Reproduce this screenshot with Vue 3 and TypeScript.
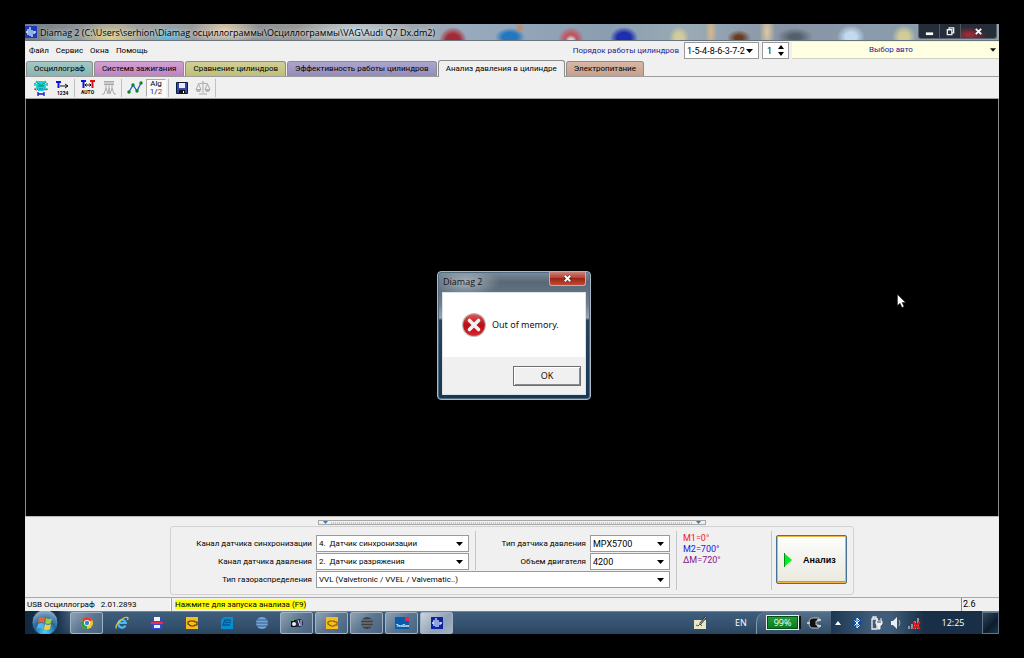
<script setup lang="ts">
import { ref } from 'vue'

interface Tab { label: string; tone: string }

const tabs: Tab[] = [
  { label: 'Осциллограф', tone: 'teal' },
  { label: 'Система зажигания', tone: 'pink' },
  { label: 'Сравнение цилиндров', tone: 'olive' },
  { label: 'Эффективность работы цилиндров', tone: 'violet' },
  { label: 'Анализ давления в цилиндре', tone: 'plain' },
  { label: 'Электропитание', tone: 'tan' },
]
const menus = ['Файл', 'Сервис', 'Окна', 'Помощь']
const active = ref(4)
const dialogOpen = ref(true)
const cylinder = ref(1)
</script>

<template>
  <div class="screen">
    <div class="desktop">
      <header class="titlebar">
        <svg class="app-icon" viewBox="0 0 12 12"><rect width="12" height="12" fill="#1a3ab8" /><path d="M1 6h2M3 3v6M5 1v9M7 4v7M9 5v3M9 6h2" fill="none" stroke="#dcecff" stroke-width="1.300" /></svg>
        <h1>Diamag 2 (C:\Users\serhion\Diamag осциллограммы\Осциллограммы\VAG\Audi Q7 Dx.dm2)</h1>
        <div class="win-buttons">
          <button aria-label="Свернуть"><svg viewBox="0 0 10 10"><path d="M1 6h8v3H1z" fill="#fff" /></svg></button>
          <button aria-label="Восстановить"><svg viewBox="0 0 10 10"><path d="M3.500 2.500V1h5v5.500H7M1.500 3h5v5.500h-5z" fill="none" stroke="#eee" stroke-width="1.500" /></svg></button>
          <button class="close" aria-label="Закрыть"><svg viewBox="0 0 10 10"><path d="M2 2l6 6M8 2L2 8" stroke="#fff" stroke-width="2" /></svg></button>
        </div>
      </header>

      <div class="menubar">
        <nav><button v-for="m in menus" :key="m">{{ m }}</button></nav>
        <label class="order-label" for="order">Порядок работы цилиндров</label>
        <div class="combo order">
          <select id="order" class="code"><option>1-5-4-8-6-3-7-2</option></select>
          <svg viewBox="0 0 7 4"><path d="M0 0h7L3.500 4z" /></svg>
        </div>
        <div class="spin">
          <input v-model="cylinder" type="text" aria-label="Цилиндр" />
          <div>
            <button aria-label="Больше" @click="cylinder++"><svg viewBox="0 0 6 4"><path d="M0 4h6L3 0z" /></svg></button>
            <button aria-label="Меньше" @click="cylinder--"><svg viewBox="0 0 6 4"><path d="M0 0h6L3 4z" /></svg></button>
          </div>
        </div>
        <button class="car">
          <span>Выбор авто</span>
          <svg viewBox="0 0 7 4"><path d="M0 0h7L3.500 4z" /></svg>
        </button>
      </div>

      <div class="tabs" role="tablist">
        <button v-for="(t, i) in tabs" :key="t.label" role="tab" :aria-selected="i === active" :class="[t.tone, { active: i === active }]" @click="active = i">{{ t.label }}</button>
      </div>

      <div class="toolbar">
        <div class="group">
          <button aria-label="Осциллограмма">
            <svg viewBox="0 0 16 16"><path d="M3 1l3 2M13 1l-3 2M1 5h3M15 5h-3M2 9l3-2M14 9l-3-2" stroke="#16c7d6" stroke-width="1.500" /><path d="M4 1h8v3l1 3-2 4H5L3 7l1-3z" fill="#19d3dc" /><path d="M1 4q3-3 5 0t4 0 5 0" fill="none" stroke="#18a050" /><path d="M1 9q3 2 4 0M11 9q2 2 4 0" fill="none" stroke="#e02020" /><path d="M5 6h6M6 9h4" stroke="#087f96" /><path d="M5 14h6M5 12v4M11 12v4" stroke="#1515d0" stroke-width="1.300" /></svg>
          </button>
          <button aria-label="Нумерация">
            <svg viewBox="0 0 16 16"><path d="M2 2h5M4.500 2v6" stroke="#1111e0" stroke-width="2" /><path d="M6 6h8M11 4l3 2-3 2" fill="none" stroke="#111" /><text x="3" y="15" font-size="5" font-weight="bold">1234</text></svg>
          </button>
        </div>
        <div class="group">
          <button aria-label="Авто">
            <svg viewBox="0 0 16 16"><path d="M1 1h5M3.500 1v7" stroke="#1111e0" stroke-width="2" /><path d="M10 1h5M12.500 1v7" stroke="#e01010" stroke-width="2" /><path d="M5 5h6M6.500 3.500L5 5l1.500 1.500M9.500 3.500L11 5 9.500 6.500" fill="none" stroke="#111" /><text x="1" y="14" font-size="5" font-weight="bold">AUTO</text></svg>
          </button>
          <button aria-label="Кривые" disabled>
            <svg viewBox="0 0 16 16"><path d="M3 1h10v4H3z" fill="#a8a8a8" /><path d="M3 3h10" stroke="#eee" /><path d="M5 5v3M8 5v3M11 5v3M1 14h2l2-6 2 6 1-6 1 6 2-6 2 6h2" fill="none" stroke="#aaa" /></svg>
          </button>
        </div>
        <div class="group">
          <button aria-label="График">
            <svg viewBox="0 0 16 16"><path d="M2 12l4-7 4 6 4-8" fill="none" stroke="#2356d8" stroke-width="1.300" /><g fill="#078a16"><circle cx="2" cy="12" r="1.700" /><circle cx="6" cy="5" r="1.700" /><circle cx="10" cy="11" r="1.700" /><circle cx="14" cy="3" r="1.700" /></g></svg>
          </button>
          <button class="pressed alg" aria-label="Алгоритм"><span>Alg</span><span><b class="blue">1</b>/<b class="red">2</b></span></button>
        </div>
        <div class="group">
          <button aria-label="Сохранить">
            <svg viewBox="0 0 16 16"><path d="M2.500 2.500h11v11h-11z" fill="#3448a4" stroke="#10183c" /><path d="M5 3h6v5H5z" fill="#e8ecf8" /><path d="M5 10h6v3H5z" fill="#111" /><path d="M9 11h1v2H9z" fill="#fff" /></svg>
          </button>
          <button aria-label="Сравнить" disabled>
            <svg viewBox="0 0 16 16"><path d="M8 1v12M4 14h8M3 4l5-1 5 1M3.500 4L1 9.500h5zM12.500 4L10 9.500h5z" fill="none" stroke="#aaa" /><path d="M1 10h5l-1 2H2zM10 10h5l-1 2h-3z" fill="#b5b5b5" /></svg>
          </button>
        </div>
      </div>

      <main class="viewer"></main>

      <section class="panel">
        <div class="splitter">
          <svg viewBox="0 0 5 3"><path d="M0 0h5L2.500 3z" /></svg><i></i><svg viewBox="0 0 5 3"><path d="M0 0h5L2.500 3z" /></svg>
        </div>
        <form class="settings" @submit.prevent>
          <div class="fields">
            <label for="sync">Канал датчика синхронизации</label>
            <div class="combo"><select id="sync"><option>4.&nbsp; Датчик синхронизации</option></select><svg viewBox="0 0 7 4"><path d="M0 0h7L3.500 4z" /></svg></div>
            <div class="rule"></div>
            <label for="sensor">Тип датчика давления</label>
            <div class="combo"><select id="sensor" class="code"><option>MPX5700</option></select><svg viewBox="0 0 7 4"><path d="M0 0h7L3.500 4z" /></svg></div>
            <label for="press">Канал датчика давления</label>
            <div class="combo"><select id="press"><option>2.&nbsp; Датчик разряжения</option></select><svg viewBox="0 0 7 4"><path d="M0 0h7L3.500 4z" /></svg></div>
            <label for="volume">Объем двигателя</label>
            <div class="combo"><select id="volume" class="code"><option>4200</option></select><svg viewBox="0 0 7 4"><path d="M0 0h7L3.500 4z" /></svg></div>
            <label for="valves">Тип газораспределения</label>
            <div class="combo wide"><select id="valves"><option>VVL (Valvetronic / VVEL / Valvematic..)</option></select><svg viewBox="0 0 7 4"><path d="M0 0h7L3.500 4z" /></svg></div>
          </div>
          <div class="marks">
            <span class="m1">M1=0°</span>
            <span class="m2">M2=700°</span>
            <span class="dm">ΔM=720°</span>
          </div>
          <div class="run">
            <button class="analyze"><svg viewBox="0 0 8 14"><path d="M0 0l8 7-8 7z" fill="#00f020" /><path d="M.5 0v14" stroke="#08901c" /></svg><span>Анализ</span></button>
          </div>
        </form>
      </section>

      <footer class="status">
        <div class="device"><span>USB Осциллограф</span><span>2.01.2893</span></div>
        <div class="hint"><mark>Нажмите для запуска анализа (F9)</mark></div>
        <div class="version">2.6</div>
      </footer>

      <div class="taskbar">
        <button class="start" aria-label="Пуск">
          <svg viewBox="0 0 28 23">
            <defs><radialGradient id="orb" cx="50%" cy="85%" r="85%"><stop offset="0" stop-color="#4fd0f4" /><stop offset=".5" stop-color="#24679c" /><stop offset="1" stop-color="#9db8cc" /></radialGradient></defs>
            <circle cx="14" cy="11.500" r="13" fill="url(#orb)" stroke="#16344e" />
            <path d="M8 7q3-2 6 0l-1 5q-3-2-6 0z" fill="#f0602c" /><path d="M15 7q3 2 6 0l-1 5q-3 2-6 0z" fill="#9ccb3c" />
            <path d="M7 13q3-2 6 0l-1 5q-3-2-6 0z" fill="#58b4ee" /><path d="M14 13q3 2 6 0l-1 5q-3 2-6 0z" fill="#fccb38" />
          </svg>
        </button>
        <div class="tasks">
          <button class="open" aria-label="Chrome"><svg viewBox="0 0 14 14"><circle cx="7" cy="7" r="6" fill="#f8c81c" /><path d="M7 7L1.800 4A6 6 0 0 1 12.200 4z" fill="#e23b2e" /><path d="M7 7L1.800 4A6 6 0 0 0 7 13z" fill="#27a04b" /><circle cx="7" cy="7" r="3" fill="#fff" /><circle cx="7" cy="7" r="2.200" fill="#3b7de8" /></svg></button>
          <button aria-label="Internet Explorer"><svg viewBox="0 0 14 14"><path d="M10.500 9.500A3.800 3.800 0 1 1 10.800 7H4" fill="none" stroke="#45bdf4" stroke-width="2.200" /><path d="M1.500 12.500C-1 9 9 0 12.500 1.500q1 .5 0 2.500" fill="none" stroke="#f4cb45" stroke-width="1.200" /></svg></button>
          <button aria-label="Total Commander"><svg viewBox="0 0 14 14"><path d="M2 1h10v12H2z" fill="#3447cf" /><path d="M4 1h6v4H4z" fill="#f2f2f2" /><path d="M1 6h12v2H1z" fill="#e63244" /><path d="M4 9h6v3H4z" fill="#eef" /></svg></button>
          <button aria-label="Диагностика"><svg viewBox="0 0 14 14"><path d="M1 1h12v12H1z" fill="#f8bd18" /><path d="M3 6l2-1h4l1 1h2v3h-2l-1 1H6L3 8z" fill="none" stroke="#4a3506" stroke-width="1.200" /></svg></button>
          <button aria-label="Электросхемы"><svg viewBox="0 0 14 14"><path d="M4 1h9v12H1V4z" fill="#078ed0" /><path d="M11 4H5L3 9h7M5 6.500h6" fill="none" stroke="#055b91" stroke-width="1.300" /></svg></button>
          <button aria-label="Сфера"><svg viewBox="0 0 14 14"><circle cx="7" cy="7" r="6" fill="#78a4d6" /><path d="M2 4h10M1 7h12M2 10h10" stroke="#315a8e" /></svg></button>
          <button class="open" aria-label="Камера"><svg viewBox="0 0 14 14"><path d="M1 4h6v7H1z" fill="#111" /><circle cx="9" cy="7" r="4" fill="#242a58" /><circle cx="4" cy="8" r="2" fill="#eee" /><path d="M8 4l2 6M11 4v6" stroke="#ddd" /><path d="M1 4h3" stroke="#29be39" stroke-width="2" /></svg></button>
          <button class="open" aria-label="Диагностика"><svg viewBox="0 0 14 14"><path d="M1 1h12v12H1z" fill="#f8bd18" /><path d="M3 6l2-1h4l1 1h2v3h-2l-1 1H6L3 8z" fill="none" stroke="#7d5909" stroke-width="1.200" /></svg></button>
          <button class="open" aria-label="Сфера"><svg viewBox="0 0 14 14"><circle cx="7" cy="7" r="6" fill="#3c4044" /><path d="M2 4h10M1 7h12M2 10h10" stroke="#808890" /></svg></button>
          <button class="open" aria-label="TecDoc"><svg viewBox="0 0 14 14"><path d="M0 1h14v12H0z" fill="#075da9" /><path d="M10 1h4v4h-4z" fill="#ec2456" /><text x="1" y="11" font-size="4" font-weight="bold" fill="#fff">TecDoc</text></svg></button>
          <button class="open current" aria-label="Diamag 2"><svg viewBox="0 0 14 14"><rect x="1" y="1" width="12" height="12" fill="#1022a0" /><path d="M2 7h2M4 4v6M6 2v9M8 4v7M10 6v3M10 7h2" fill="none" stroke="#dcebff" stroke-width="1.300" /></svg></button>
        </div>
        <svg class="pen" viewBox="0 0 14 14"><path d="M1 4h12v9H1z" fill="#e9e6c8" /><path d="M3 9l2 1 2-2 2 2" fill="none" stroke="#555" /><path d="M7 8l6-7" stroke="#222" stroke-width="2" /><path d="M7 8l6-7" stroke="#ddd" stroke-width=".8" /></svg>
        <span class="lang">EN</span>
        <div class="power">
          <span class="battery">99%</span>
          <svg viewBox="0 0 14 14"><path d="M12 2H6Q2 2 2 7t4 5h6V9H9V5h3z" fill="#111" stroke="#ddd" stroke-width=".8" /><path d="M10 4h4M10 10h4M0 7h3" stroke="#e4e4e4" stroke-width="1.500" /></svg>
        </div>
        <div class="tray">
          <svg viewBox="0 0 14 14"><path d="M4 9l3-4 3 4z" fill="#fff" /></svg>
          <svg viewBox="0 0 14 14"><ellipse cx="7" cy="7" rx="4.500" ry="6" fill="#0f4da2" /><path d="M4.500 4.500l5 5L7 12V2l2.500 2.500-5 5" fill="none" stroke="#fff" /></svg>
          <svg viewBox="0 0 14 14"><path d="M3 3h5v10H3zM4 1h3v2H4z" fill="none" stroke="#eee" stroke-width="1.300" /><path d="M7 5h6v3l-2 2v3H9v-3L7 8zM8 2v3M12 2v3" fill="#eee" stroke="#eee" /><path d="M8 6h4" stroke="#345" /></svg>
          <svg viewBox="0 0 14 14"><path d="M3 5h2l4-4v12L5 9H3z" fill="#eee" /><path d="M11 4q2 3 0 6" fill="none" stroke="#9ab" /></svg>
          <svg viewBox="0 0 14 14"><path d="M2 10v3M5 8v5M8 5v8M11 2v11" stroke="#8b98a4" stroke-width="2" /><path d="M6 6l7 7M13 6l-7 7" stroke="#e01818" stroke-width="2" /></svg>
        </div>
        <time>12:25</time>
        <button class="show-desktop" aria-label="Свернуть все окна"></button>
      </div>

      <div v-if="dialogOpen" class="dialog" role="alertdialog" aria-labelledby="dlg-title">
        <div class="dlg-head">
          <h2 id="dlg-title">Diamag 2</h2>
          <button aria-label="Закрыть" @click="dialogOpen = false"><svg viewBox="0 0 10 10"><path d="M2 2l6 6M8 2L2 8" stroke="#4b2020" stroke-width="3.500" /><path d="M2 2l6 6M8 2L2 8" stroke="#fff" stroke-width="2.200" /></svg></button>
        </div>
        <div class="dlg-body">
          <div class="message">
            <svg viewBox="0 0 26 26">
              <defs><linearGradient id="err" x1="0" y1="0" x2="0" y2="1"><stop offset="0" stop-color="#e0585a" /><stop offset=".5" stop-color="#b80e14" /><stop offset="1" stop-color="#d8252c" /></linearGradient></defs>
              <circle cx="13" cy="13" r="12" fill="#b9b9b9" /><circle cx="13" cy="13" r="10.800" fill="url(#err)" />
              <path d="M8.500 8.500l9 9M17.500 8.500l-9 9" stroke="#f2f2f2" stroke-width="3.600" stroke-linecap="round" />
            </svg>
            <p>Out of memory.</p>
          </div>
          <div class="actions"><button @click="dialogOpen = false">OK</button></div>
        </div>
      </div>

      <svg class="pointer" viewBox="0 0 9 14"><path d="M.5.5v11l2.500-2.300 2 4.300 2-1-2-4h3.500z" fill="#fff" stroke="#223" stroke-width=".5" /></svg>
    </div>
  </div>
</template>

<style>
body { background: #000; }
</style>

<style scoped>
* { box-sizing: border-box; }
button, input, select { font: inherit; color: inherit; margin: 0; padding: 0; border: 0; background: none; border-radius: 0; }
svg { display: block; flex: none; }
h1, h2, p { margin: 0; font-weight: normal; }
.screen { min-height: 100vh; padding: 24px 25px; display: flex; background: #000; font: 8px/12px Roboto, "Liberation Sans", sans-serif; color: #000; }
.desktop { position: relative; flex: 1; min-width: 0; display: flex; flex-direction: column; background: #f0f0f0; }

.titlebar {
  height: 17px; display: flex; align-items: center; gap: 3px; overflow: hidden; border-bottom: 1px solid #69737c;
  background:
    radial-gradient(ellipse 16px 12px at 36px 17px, #86b8ca, transparent),
    radial-gradient(ellipse 34px 18px at 85px 14px, #d9cc8a, transparent),
    radial-gradient(ellipse 20px 12px at 143px 13px, #5cb6de, transparent),
    radial-gradient(ellipse 34px 18px at 200px 6px, #dfcbb0, transparent),
    radial-gradient(ellipse 60px 18px at 330px 8px, #bdd0dd, transparent),
    radial-gradient(ellipse 14px 14px at 428px 17px, #a52a35 50%, transparent),
    radial-gradient(ellipse 5px 5px at 495px 4px, #d08452, transparent),
    radial-gradient(ellipse 15px 9px at 485px 13px, #2277bf 50%, transparent),
    radial-gradient(ellipse 6px 6px at 546px 17px, #cbd5dc 40%, transparent),
    radial-gradient(ellipse 13px 13px at 546px 16px, #c3535f 50%, transparent),
    radial-gradient(ellipse 14px 11px at 599px 14px, #1d2fae 50%, transparent),
    radial-gradient(ellipse 10px 12px at 654px 14px, #d2cc9a 40%, transparent),
    radial-gradient(ellipse 6px 24px at 686px 8px, #d8b88a, transparent),
    radial-gradient(ellipse 12px 8px at 714px 14px, #6b3a20 30%, transparent),
    radial-gradient(ellipse 8px 24px at 742px 8px, #dfc9a0, transparent),
    radial-gradient(ellipse 18px 9px at 770px 13px, #56606c 30%, transparent),
    radial-gradient(ellipse 14px 12px at 826px 13px, #c2d9f0 40%, transparent),
    radial-gradient(ellipse 12px 12px at 879px 13px, #d2cc9a 40%, transparent),
    linear-gradient(90deg, #747d84, #a0a2a2 10%, #8d9294 25%, #a6a196 32%, #98aabd 45%, #8b9db1 60%, #9aabb6 68%, #8794a6 78%, #8ea5b2);
}
.app-icon { width: 12px; height: 12px; }
h1 { flex: 1; min-width: 0; white-space: nowrap; overflow: hidden; font: 9px/15px "Open Sans", "Noto Sans", sans-serif; text-shadow: 0 0 4px #fff; }
.win-buttons { display: flex; align-self: flex-start; margin-right: 2px; height: 15px; border: 1px solid #59616b; border-top: 0; border-radius: 0 0 3px 3px; background: #252d38; }
.win-buttons button { width: 21px; display: grid; place-items: center; border-right: 1px solid #505863; }
.win-buttons .close { width: 35px; border: 0; background: radial-gradient(ellipse 18px 8px at 8px 11px, #b02838, transparent); }
.win-buttons svg { width: 9px; height: 9px; }

.menubar { height: 19px; display: flex; align-items: center; gap: 3px; }
nav { display: flex; gap: 7px; padding-left: 4px; flex: 1; }
.order-label { color: #1c1c92; margin-right: 2px; white-space: nowrap; }
.combo { position: relative; display: flex; height: 17px; background: #fff; border: 1px solid #9a9a9a; }
.combo select { appearance: none; width: 100%; padding-left: 2px; outline: 0; }
.combo .code { font-size: 9px; }
.combo svg { position: absolute; right: 5px; top: 6px; width: 7px; height: 4px; pointer-events: none; }
.order { width: 75px; }
.spin { width: 27px; height: 17px; display: flex; justify-content: space-between; background: #fff; border: 1px solid #9a9a9a; font-size: 9px; }
.spin input { width: 12px; padding-left: 4px; outline: 0; }
.spin div { display: flex; flex-direction: column; justify-content: center; gap: 3px; padding-right: 4px; }
.spin button { line-height: 0; }
.spin svg { width: 6px; height: 4px; }
.car { width: 207px; height: 17px; display: flex; align-items: center; padding-right: 3px; background: #ffffe1; border-bottom: 1px solid #d0d0c0; color: #1c1c92; }
.car span { flex: 1; }
.car svg { width: 6px; height: 4px; fill: #111; }

.tabs { height: 17px; display: flex; align-items: flex-end; gap: 1px; padding-left: 1px; border-bottom: 1px solid #9c9c9c; }
.tabs button { height: 15px; padding: 0 7px; border: 1px solid #8d8d8d; border-bottom: 0; border-radius: 3px 3px 0 0; white-space: nowrap; }
.tabs .teal { background: linear-gradient(#a3c8c5, #87b3b0); }
.tabs .pink { background: linear-gradient(#d3a0d3, #bd84bd); }
.tabs .olive { background: linear-gradient(#d0d096, #bebe7c); }
.tabs .violet { background: linear-gradient(#aca6cd, #938cba); }
.tabs .tan { background: linear-gradient(#d7b7a6, #c5a08d); }
.tabs .active { height: 17px; margin-bottom: -1px; background: #f0f0f0; }

.toolbar { height: 22px; display: flex; align-items: center; border-bottom: 1px solid #a0a0a0; padding-left: 3px; }
.group { height: 18px; display: flex; align-items: center; gap: 1px; padding: 0 2px 0 3px; border-right: 1px solid #c0c0c0; }
.group button { width: 20px; height: 18px; display: grid; place-items: center; }
.group svg { width: 16px; height: 16px; }
.group .pressed { background: #fafafa; border: 1px solid #aaa; border-right-color: #fff; border-bottom-color: #fff; }
.group .alg { line-height: 8px; display: flex; flex-direction: column; align-items: center; justify-content: center; }
.alg b { font-weight: normal; }
.blue { color: #1111d0; }
.red { color: #e01010; }

.viewer { flex: 1; background: #000; border: solid #8c8c8c; border-width: 0 1px; }

.panel { height: 81px; display: flex; flex-direction: column; align-items: center; padding-top: 3px; border-top: 1px solid #b8b8b8; }
.splitter { width: 388px; height: 5px; display: flex; align-items: center; gap: 3px; padding: 0 4px; border: 1px solid #a8a8a8; }
.splitter i { flex: 1; height: 2px; background: repeating-linear-gradient(90deg, #a9cfee 0 1px, transparent 1px 2px); }
.splitter svg { width: 5px; height: 3px; fill: #1e84d8; }
.settings { width: 684px; height: 69px; display: flex; gap: 5px; margin: 1px 0 0; padding: 4px 6px 4px 20px; border: 1px solid #d2d2d2; border-radius: 3px; }
.fields { flex: 1; display: grid; grid-template-columns: 122px 153px 4px 108px 80px; grid-template-rows: repeat(3, 17px); gap: 1px 3px; padding-top: 4px; align-items: center; }
.fields label { text-align: right; white-space: nowrap; padding-right: 1px; }
.rule { grid-row: span 2; align-self: stretch; justify-self: end; margin-top: -4px; width: 1px; background: #c6c6c6; }
.wide { grid-column: 2 / 6; }
.marks { width: 90px; padding: 2px 0 0 6px; border-left: 1px solid #c6c6c6; display: flex; flex-direction: column; font-size: 9px; line-height: 11px; }
.m1 { color: #f01818; }
.m2 { color: #2020e8; }
.dm { color: #861686; }
.run { border-left: 1px solid #c6c6c6; padding: 4px 0 0 4px; }
.analyze { width: 71px; height: 49px; display: flex; align-items: center; gap: 11px; padding-left: 7px; border: 1px solid #48718f; border-radius: 2px; background: linear-gradient(#fdfdfb, #e9e9df); box-shadow: inset 0 0 0 1px #f0b348, inset 0 -1px 0 1px #dc961e; font: bold 9px/12px "Liberation Sans", sans-serif; }
.analyze svg { width: 8px; height: 14px; }

.status { height: 14px; display: flex; border-top: 1px solid #a8a8a8; line-height: 13px; }
.device { width: 146px; padding-left: 2px; display: flex; gap: 6px; border-right: 1px solid #fff; white-space: nowrap; }
.hint { flex: 1; padding-left: 3px; border-left: 1px solid #a8a8a8; }
mark { background: #ff0; color: #000; }
.version { width: 38px; padding-left: 1px; border-left: 1px solid #888; font-size: 9px; }

.taskbar { height: 23px; display: flex; align-items: center; background: linear-gradient(#6f8496 0 1px, #3f5e7c 1px, #34526f 60%, #29445f); color: #fff; }
.start { width: 45px; height: 23px; padding-left: 6px; background: linear-gradient(90deg, #12283f, #18314a 70%, transparent); }
.start svg { width: 28px; height: 23px; }
.tasks { flex: 1; display: flex; gap: 2px; }
.tasks button { width: 33px; height: 22px; display: grid; place-items: center; }
.tasks svg { width: 14px; height: 14px; }
.tasks .open { border: 1px solid #a0b2c2; border-radius: 2px; background: linear-gradient(135deg, #8fa3b5, #5c7690 50%, #486480); }
.tasks .current { background: linear-gradient(135deg, #cbd5de, #8ea2b6 60%, #a4b4c4); }
.pen { width: 14px; height: 14px; margin-right: 28px; }
.lang { width: 21px; font: 9px/14px "Open Sans", sans-serif; }
.power { width: 75px; height: 22px; display: flex; align-items: center; gap: 8px; padding-left: 9px; border-left: 1px solid #8198ac; border-radius: 10px 0 0; background: linear-gradient(#54708a, #304b66); }
.power svg { width: 14px; height: 14px; }
.battery { width: 33px; height: 15px; border: 1px solid #eee; box-shadow: 3px 0 0 -1px #111, inset 0 0 0 1px #064d10; background: linear-gradient(#299d3d, #087a1c); text-align: center; font: 9px/13px "Open Sans", sans-serif; }
.tray { height: 23px; display: flex; align-items: center; gap: 5px; padding-right: 3px; background: linear-gradient(90deg, #1c3853, #3f5c78 45%, #3f5c78 65%, #182f47); }
.tray svg { width: 14px; height: 14px; }
time { width: 58px; height: 23px; text-align: center; background: #182f47; font: 9px/23px "Open Sans", sans-serif; }
.show-desktop { width: 17px; height: 22px; border: 1px solid #5d7386; background: linear-gradient(135deg, #30475c, #0c1c2c 60%, #1d3449); }

.dialog { position: absolute; left: 412px; top: 247px; width: 154px; padding: 0 4px 4px; border: 1px solid #a8bac8; border-radius: 4px; background: radial-gradient(ellipse 34px 14px at 28px 10px, #a9b5be, transparent), linear-gradient(#7d8d9b, #596876 8%, #71808e 26%, #98a6b3 36%, #29435a 38%, #173752); box-shadow: inset 0 0 0 1px #506b80; color: #111; }
.dlg-head { height: 20px; display: flex; justify-content: space-between; }
h2 { padding: 2px 1px; font: 9px/15px "Open Sans", "Noto Sans", sans-serif; }
.dlg-head button { width: 37px; height: 14px; display: grid; place-items: center; border: 1px solid #d0a8a4; border-top: 0; border-radius: 0 0 3px 3px; background: linear-gradient(#c98179, #b44436 45%, #9e2414 50%, #bf4a36); }
.dlg-head svg { width: 9px; height: 9px; }
.dlg-body { border: 1px solid #dbe2e8; background: #f0f0f0; font: 9px/14px "Noto Sans", sans-serif; }
.message { height: 64px; display: flex; align-items: center; gap: 5px; padding-left: 18px; background: #fff; }
.message svg { width: 26px; height: 26px; }
.actions { height: 37px; display: flex; justify-content: flex-end; align-items: center; padding-right: 4px; }
.actions button { width: 68px; height: 20px; border: 1px solid #707070; background: #f0f0f0; box-shadow: inset 1px 1px #fff, inset -1px -1px #8a8a8a; }
.pointer { position: absolute; left: 872px; top: 270px; width: 9px; height: 14px; }
</style>
